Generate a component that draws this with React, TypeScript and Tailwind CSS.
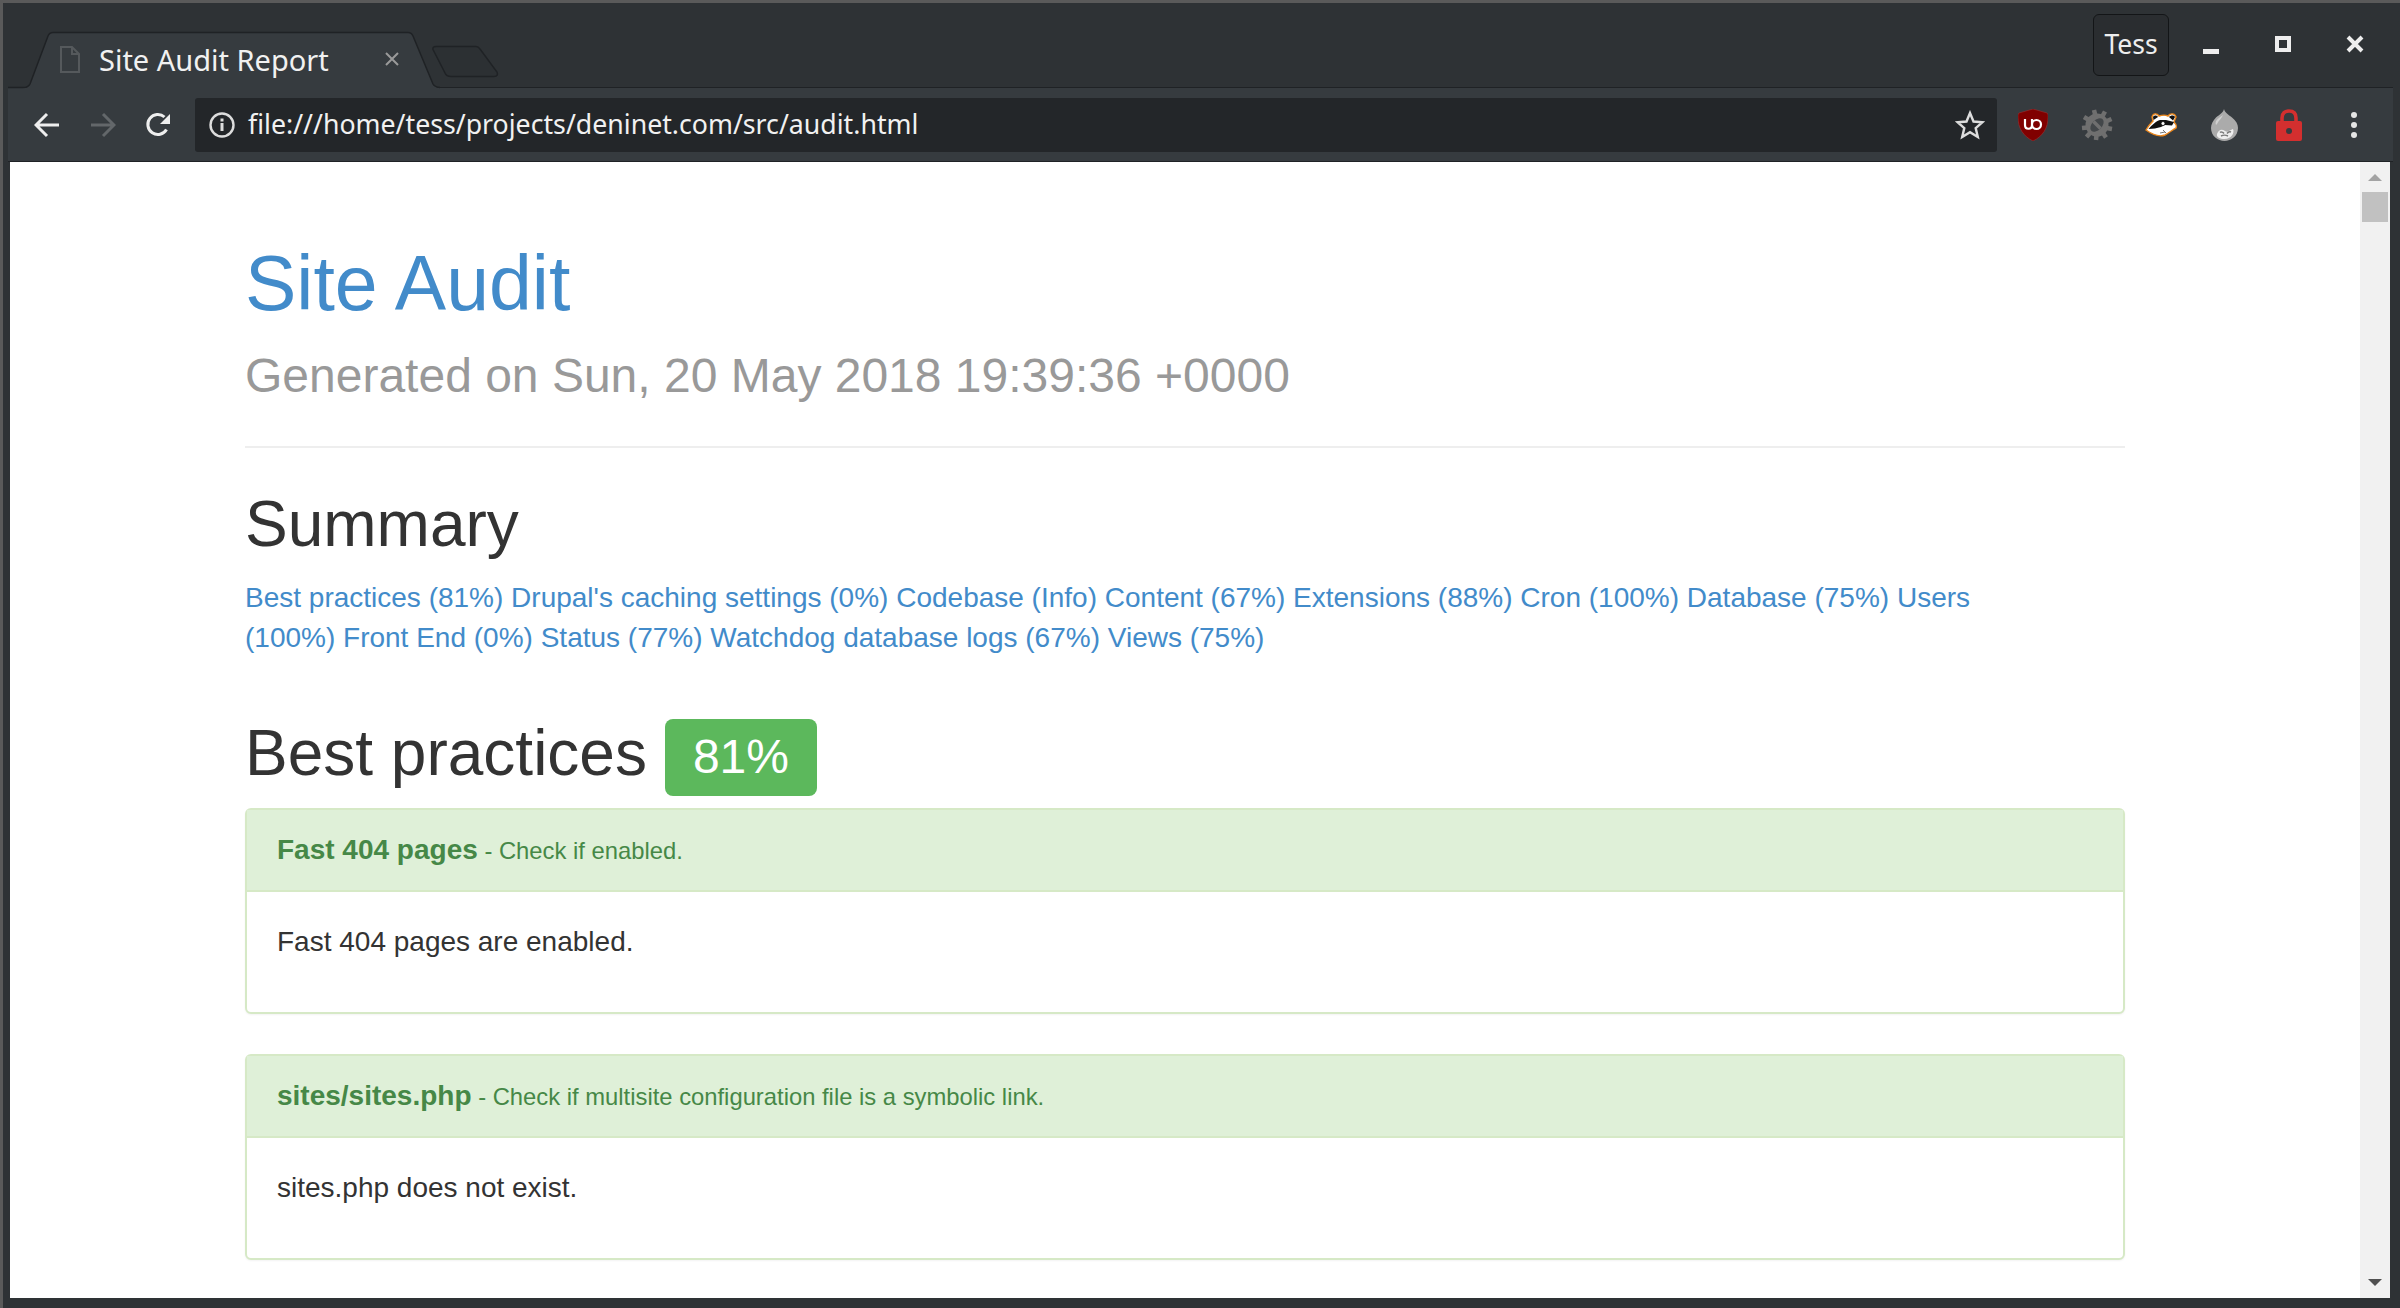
const links = [
  "Best practices (81%)",
  "Drupal's caching settings (0%)",
  "Codebase (Info)",
  "Content (67%)",
  "Extensions (88%)",
  "Cron (100%)",
  "Database (75%)",
  "Users",
  "(100%)",
  "Front End (0%)",
  "Status (77%)",
  "Watchdog database logs (67%)",
  "Views (75%)",
];

const checks = [
  { title: "Fast 404 pages", desc: "Check if enabled.", body: "Fast 404 pages are enabled." },
  { title: "sites/sites.php", desc: "Check if multisite configuration file is a symbolic link.", body: "sites.php does not exist." },
];

function TabShape() {
  return (
    <svg className="absolute left-0 top-0" width="520" height="88" viewBox="0 0 520 88">
      <path d="M22 85C25 84.500 26 83 27 81L45 33C46 30.500 48 29.500 50 29.500H405C407 29.500 409 30.500 410 33L430 81C431 83 433 84.500 436 85Z" fill="#363b3f" />
      <path d="M5 84.500H20C24 84.500 26 83 27 81L45 33C46 30.500 48 29.500 50 29.500H405C407 29.500 409 30.500 410 33L430 81C431 83 433 84 437 84.500" fill="none" stroke="#1f2225" strokeWidth="1.500" />
      <path d="M433 43.500H473C475 43.500 476 44.500 477 46L494 69C495 71.500 494.500 73.500 491 73.500H448C445 73.500 443 72.500 442 70L430 46.500C429.500 44.500 430.500 43.500 433 43.500Z" fill="#2c3033" stroke="#1f2225" strokeWidth="1.500" />
    </svg>
  );
}

function Shield() {
  return (
    <svg width="30" height="32" viewBox="0 0 30 32">
      <path d="M15 0L29 4C30 5 30 6 30 8C30 19 25 27 15 32C5 27 0 19 0 8C0 6 0 5 1 4Z" fill="#800000" stroke="#a33" strokeWidth="0.500" />
      <path d="M7 10V16C7 21 14 21 14 16V10M14 15.500A4.500 4.500 0 1 1 23 15.500A4.500 4.500 0 1 1 14 15.500" fill="none" stroke="#fff" strokeWidth="2.200" />
    </svg>
  );
}

function Bug() {
  return (
    <svg width="34" height="34" viewBox="0 0 34 34">
      <g stroke="#6f6f6f" strokeWidth="4.500">
        <path d="M14 2L15.500 8M25 3.500L22 9M31.500 11L26 13.500M32 21L26.500 20M26 29.500L23 25M16 32L16.500 27M6.500 29L10 25M2 20L8 19.500M4 9L9 12" />
      </g>
      <circle cx="17" cy="17" r="11.500" fill="#6f6f6f" />
      <ellipse cx="17" cy="17" rx="8" ry="5" transform="rotate(-45 17 17)" fill="#43474a" />
      <path d="M13.500 13.500L20.500 20.500" stroke="#6f6f6f" strokeWidth="3.500" />
    </svg>
  );
}

function Badger() {
  return (
    <svg width="33" height="25" viewBox="0 0 33 25">
      <path d="M1 18C3 14 6 11 8 9L7 5C8 1 12 1 14 4C17 3 21 3 23 4C25 1 30 1 31 5L29 10C31 12 32 14 31 16C27 18 24 21 20 23C15 25 8 23 1 18Z" fill="#ffffff" stroke="#e8841a" strokeWidth="1.400" />
      <path d="M8.500 8L8 5C9 3 12 3 13 5ZM24 5C26 3 29 3 30 5L28 8.500Z" fill="#111111" />
      <path d="M3.500 17C7 13 11 9 15 8L21 8L29 10L27 13.500L20 13L16 15C12 16 8 17 3.500 17Z" fill="#111111" />
      <circle cx="18" cy="11.500" r="2" fill="#ffffff" stroke="#111111" strokeWidth="0.800" />
      <path d="M15 21L20 20M18 18L21 21" stroke="#777777" strokeWidth="1" />
    </svg>
  );
}

function Drop() {
  return (
    <svg width="28" height="32" viewBox="0 0 28 32">
      <path d="M13 0C14 4 18 6 21 8.500C25 12 27 15 27 19C27 27 20 32 13.500 32C7 32 0 27 0 19C0 15 2 12 5 8.500C8 6 12 4 13 0Z" fill="#ababab" />
      <path d="M5 12C7 9 10 7.500 12 6C11 9 8 11 6 15C5 17 4 15 5 12Z" fill="#d0d0d0" />
      <path d="M6 25C8 20 11 20 14 22C17 24 19 21 22 20C24 24 20 30 13.500 30C9 30 5 28 6 25Z" fill="#eeeeee" />
      <path d="M9 23.500C10 22.500 12 23 13 24.500M16 24.500C17 23 19 22.500 20 23M10 27C12 26 15 26 17 27" stroke="#7a7a7a" fill="none" strokeWidth="1.400" />
    </svg>
  );
}

function Lock() {
  return (
    <svg width="26" height="32" viewBox="0 0 26 32">
      <path d="M6 14V9C6 4 9 2 13 2C17 2 20 4 20 9V14" fill="none" stroke="#d32f2f" strokeWidth="3.600" />
      <rect x="0" y="12" width="26" height="20" rx="2" fill="#d32f2f" />
      <circle cx="13" cy="22" r="3" fill="#363b3f" />
    </svg>
  );
}

function Toolbar() {
  return (
    <div className="ml-[5px] mr-[7px] flex h-[75px] items-center border-y border-[#1f2225] bg-[#363b3f] pl-[26px]">
      <svg width="26" height="26" viewBox="0 0 26 26" className="mr-[30px]">
        <path d="M25 13H3M13 2L2 13L13 24" fill="none" stroke="#eeeeee" strokeWidth="3" />
      </svg>
      <svg width="26" height="26" viewBox="0 0 26 26" className="mr-[29px]">
        <path d="M1 13H23M13 2L24 13L13 24" fill="none" stroke="#63676a" strokeWidth="3" />
      </svg>
      <svg width="26" height="26" viewBox="0 0 26 26" className="mr-[24px]">
        <path d="M21.500 17.500A10 10 0 1 1 19.500 5" fill="none" stroke="#eeeeee" strokeWidth="3" />
        <path d="M15 12H25V2Z" fill="#eeeeee" />
      </svg>
      <div className="flex h-[54px] w-[1802px] items-center rounded-[3px] bg-[#232629] pl-[14px] pr-[12px]">
        <svg width="26" height="26" viewBox="0 0 26 26" className="mr-[13px]">
          <circle cx="13" cy="13" r="11.500" fill="none" stroke="#dddddd" strokeWidth="2.400" />
          <rect x="11.500" y="11" width="3" height="8" fill="#dddddd" />
          <rect x="11.500" y="6.500" width="3" height="3" fill="#dddddd" />
        </svg>
        <span className="font-['Noto_Sans',sans-serif] text-[26.700px] leading-none text-[#f1f1f1]">
          file:///home/tess/projects/deninet.com/src/audit.html
        </span>
        <svg width="30" height="30" viewBox="0 0 30 30" className="ml-auto">
          <path d="M15 3L18.500 11.500L27.500 12.200L20.700 18.100L22.800 27L15 22.200L7.200 27L9.300 18.100L2.500 12.200L11.500 11.500Z" fill="none" stroke="#dddddd" strokeWidth="2.400" />
        </svg>
      </div>
      <div className="ml-[4px] flex w-[386px] items-center">
        <div className="flex w-[64px] justify-center"><Shield /></div>
        <div className="flex w-[64px] justify-center"><Bug /></div>
        <div className="flex w-[64px] justify-center"><Badger /></div>
        <div className="flex w-[64px] justify-center"><Drop /></div>
        <div className="flex w-[64px] justify-center"><Lock /></div>
        <div className="flex w-[66px] flex-col items-center gap-[4px]">
          <span className="h-[6px] w-[6px] rounded-full bg-[#e5e5e5]" />
          <span className="h-[6px] w-[6px] rounded-full bg-[#e5e5e5]" />
          <span className="h-[6px] w-[6px] rounded-full bg-[#e5e5e5]" />
        </div>
      </div>
    </div>
  );
}

function TitleBar() {
  return (
    <div className="relative z-10 flex h-[84px] items-start">
      <TabShape />
      <div className="relative flex h-[84px] w-[410px] items-center pl-[57px] pt-[28px]">
        <svg width="20" height="27" viewBox="0 0 20 27" className="mr-[19px]">
          <path d="M1 1H12L19 8V26H1Z M12 1V8H19" fill="none" stroke="#55595c" strokeWidth="2" />
        </svg>
        <span className="font-['Noto_Sans',sans-serif] text-[29px] leading-none text-[#f1f1f1]">Site Audit Report</span>
        <svg width="14" height="14" viewBox="0 0 14 14" className="ml-[56px]">
          <path d="M1 1L13 13M13 1L1 13" stroke="#9a9a9a" strokeWidth="2" />
        </svg>
      </div>
      <div className="relative ml-auto mr-[9px] mt-[11px] flex items-center">
        <div className="flex h-[62px] w-[76px] items-center justify-center rounded-[6px] border border-[#131517] bg-[#2a2d30] pb-[2px] font-['Noto_Sans',sans-serif] text-[26.500px] leading-none text-[#eeeeee]">
          Tess
        </div>
        <div className="ml-[6px] flex h-[62px] w-[72px] items-center justify-center pt-[12px]">
          <span className="block h-[5px] w-[16px] bg-[#eeeeee]" />
        </div>
        <div className="flex h-[62px] w-[72px] items-center justify-center pb-[2px]">
          <span className="block h-[16px] w-[16px] border-[4px] border-[#eeeeee]" />
        </div>
        <div className="flex h-[62px] w-[72px] items-center justify-center pb-[2px]">
          <svg width="18" height="18" viewBox="0 0 18 18">
            <path d="M2 2L16 16M16 2L2 16" stroke="#eeeeee" strokeWidth="4" />
          </svg>
        </div>
      </div>
    </div>
  );
}

function Scrollbar() {
  return (
    <div className="flex w-[30px] shrink-0 flex-col items-center bg-[#f1f1f1]">
      <span className="mt-[12px] h-0 w-0 border-x-[7px] border-b-[7px] border-x-transparent border-b-[#a3a3a3]" />
      <span className="mt-[11px] h-[30px] w-[26px] bg-[#c1c1c1]" />
      <span className="mt-auto mb-[12px] h-0 w-0 border-x-[7px] border-t-[7px] border-x-transparent border-t-[#505050]" />
    </div>
  );
}

function Check({ title, desc, body }: { title: string; desc: string; body: string }) {
  return (
    <div className="mb-[40px] rounded-[6px] border-2 border-[#d6e9c6] bg-white shadow-[0_1px_2px_rgba(0,0,0,0.05)]">
      <div className="flex h-[82px] items-center border-b-2 border-[#d6e9c6] bg-[#dff0d8] px-[30px] text-[#468847]">
        <p className="whitespace-pre text-[23.800px]">
          <span className="text-[28px] font-bold">{title}</span> - {desc}
        </p>
      </div>
      <div className="h-[120px] px-[30px] pt-[30px] text-[28px] leading-[40px] text-[#333333]">{body}</div>
    </div>
  );
}

export default function App() {
  return (
    <div className="flex h-[1308px] w-[2400px] flex-col overflow-hidden border-t-[3px] border-l-[3px] border-[#5a5a5a] bg-[#2e3235] font-['Liberation_Sans',Arial,sans-serif]">
      <TitleBar />
      <Toolbar />
      <div className="ml-[7px] mr-[10px] flex h-[1136px] bg-white">
        <main className="flex-1 overflow-hidden pl-[235px] pr-[235px] pt-[71px]">
          <h1 className="text-[77px] leading-[100px] text-[#428bca]">Site Audit</h1>
          <p className="mt-[13px] text-[48px] leading-[60px] text-[#999999]">Generated on Sun, 20 May 2018 19:39:36 +0000</p>
          <hr className="mt-[40px] border-t-2 border-[#eeeeee]" />
          <h2 className="mt-[36px] text-[64px] leading-[80px] text-[#333333]">Summary</h2>
          <p className="mt-[14px] pr-[120px] text-[28px] leading-[40px] text-[#428bca]">
            {links.map((label) => (
              <span key={label}>
                <a href="#">{label}</a>{" "}
              </span>
            ))}
          </p>
          <div className="mt-[59px] mb-[19px] flex h-[72px] items-center">
            <h2 className="text-[64px] leading-[72px] text-[#333333]">Best practices</h2>
            <span className="ml-[18px] mt-[8px] flex h-[77px] w-[152px] items-center justify-center rounded-[8px] bg-[#5cb85c] text-[48px] leading-none text-white">
              81%
            </span>
          </div>
          {checks.map((check) => (
            <Check key={check.title} {...check} />
          ))}
        </main>
        <Scrollbar />
      </div>
    </div>
  );
}
